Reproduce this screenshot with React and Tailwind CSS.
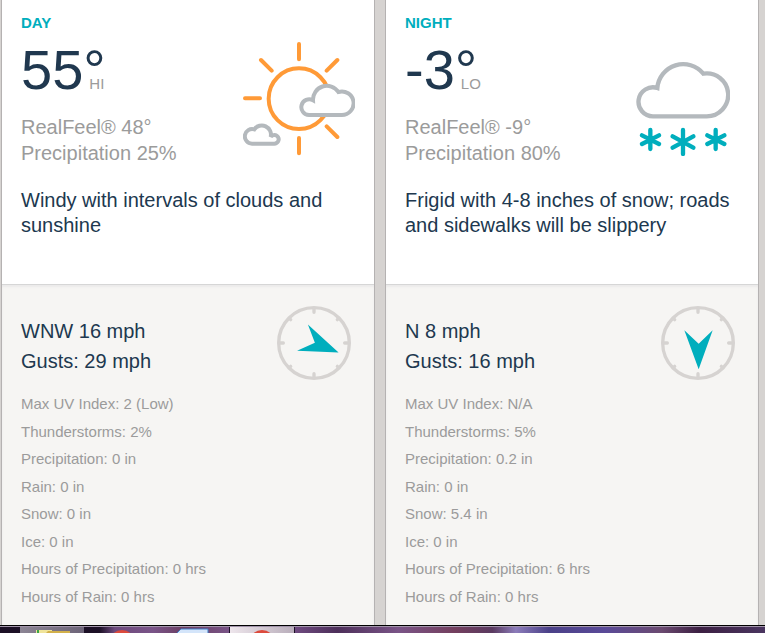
const forecasts = [
  {
    title: 'Day',
    temp: '55',
    label: 'HI',
    realFeel: '48°',
    precip: '25%',
    phrase: 'Windy with intervals of clouds and sunshine',
    wind: 'WNW 16 mph',
    gusts: '29 mph',
    windAngle: -67.5,
    Icon: SunCloudsIcon,
    stats: [
      'Max UV Index: 2 (Low)',
      'Thunderstorms: 2%',
      'Precipitation: 0 in',
      'Rain: 0 in',
      'Snow: 0 in',
      'Ice: 0 in',
      'Hours of Precipitation: 0 hrs',
      'Hours of Rain: 0 hrs',
    ],
  },
  {
    title: 'Night',
    temp: '-3',
    label: 'LO',
    realFeel: '-9°',
    precip: '80%',
    phrase: 'Frigid with 4-8 inches of snow; roads and sidewalks will be slippery',
    wind: 'N 8 mph',
    gusts: '16 mph',
    windAngle: 0,
    Icon: SnowIcon,
    stats: [
      'Max UV Index: N/A',
      'Thunderstorms: 5%',
      'Precipitation: 0.2 in',
      'Rain: 0 in',
      'Snow: 5.4 in',
      'Ice: 0 in',
      'Hours of Precipitation: 6 hrs',
      'Hours of Rain: 0 hrs',
    ],
  },
];

function SunCloudsIcon() {
  return (
    <svg viewBox="39 36 336 342" className="w-28 h-[114px]" fill="none" strokeWidth="12" aria-hidden="true">
      <g stroke="#ff9a37" strokeLinecap="round">
        <circle cx="207" cy="206" r="91" />
        <path d="M207 42V88M207 324V370M45 205H90M93 90L125 122M322 90L290 122M290 289L322 321" />
      </g>
      <g stroke="#b4b9bd" fill="#fff">
        <path d="M237 255A23.5 23.5 0 1 1 249 211A41.5 41.5 0 0 1 325 186A35.3 35.3 0 1 1 335 255Z" />
        <path d="M66 341A22 22 0 1 1 73 298A27.5 27.5 0 0 1 122 321A13 13 0 1 1 133 341Z" />
      </g>
    </svg>
  );
}

function SnowIcon() {
  return (
    <svg viewBox="48 60 282 285" className="w-[94px] h-[95px]" fill="none" aria-hidden="true">
      <path
        d="M99 226A43.5 43.5 0 1 1 112 141A78 78 0 0 1 250 98A64.4 64.4 0 1 1 260 226Z"
        stroke="#b4b9bd"
        strokeWidth="13"
      />
      <path
        d="M91 267V324M66 283L117 309M117 283L66 309M189 267V339M158 286L220 320M220 286L158 320M287 267V324M262 283L313 309M313 283L262 309"
        stroke="#00aebd"
        strokeWidth="13"
        strokeLinecap="round"
      />
    </svg>
  );
}

function Compass({ angle }) {
  return (
    <svg viewBox="-111 -111 222 222" className="w-[74px] h-[74px] shrink-0" aria-hidden="true">
      <g fill="none" stroke="#d6d3d1" strokeWidth="10" strokeLinecap="round">
        <circle r="106" />
        <path d="M0 -102V-92M0 102V92M-102 0H-92M102 0H92M-74 -74L-70 -70M74 -74L70 -70M-74 74L-70 70M74 74L70 70" />
      </g>
      <path d="M-41 -38L2 2L44 -38L2 79Z" fill="#00aebd" transform={`rotate(${angle})`} />
    </svg>
  );
}

const ForecastCard = ({ item }) => {
  const { Icon } = item;

  return (
    <section className="flex-1 min-w-0 flex flex-col bg-[#f6f5f3] border-x border-[#b5b2b2]">
      <div className="bg-white px-[19px] pt-[13px] pb-[46px]">
        <div className="flex justify-between">
          <div>
            <h2 className="text-[15px] leading-5 font-bold uppercase text-[#00aebd]">{item.title}</h2>
            <div className="flex mt-[9px] text-[56px] leading-[56px] text-[#20384f]">
              <span>{item.temp}</span>
              <span className="relative">
                °
                <span className="absolute left-[6px] bottom-1 text-[15px] leading-5 text-[#9b9b9b]">{item.label}</span>
              </span>
            </div>
            <p className="mt-4 text-xl leading-[26px] text-[#9b9b9b]">RealFeel® {item.realFeel}</p>
            <p className="text-xl leading-[26px] text-[#9b9b9b]">Precipitation {item.precip}</p>
          </div>
          <div className="w-28 h-[143px] flex items-end justify-center">
            <Icon />
          </div>
        </div>
        <p className="mt-[22px] text-xl leading-[25px] text-[#20384f]">{item.phrase}</p>
      </div>

      <div className="flex-1 flex flex-col px-[19px] pt-[21px] pb-[15px] border-t border-[#d6d6d6] shadow-[inset_0_2px_2px_#ebeaea]">
        <div className="flex justify-between pr-1">
          <div className="pt-[10px] text-xl leading-[30px] text-[#20384f]">
            <p>{item.wind}</p>
            <p>Gusts: {item.gusts}</p>
          </div>
          <Compass angle={item.windAngle} />
        </div>
        <ul className="flex-1 flex flex-col justify-between mt-[10px] text-[15px] leading-[27px] text-[#9b9b9b]">
          {item.stats.map((stat) => (
            <li key={stat}>{stat}</li>
          ))}
        </ul>
      </div>
    </section>
  );
};

// Only the top edge of the desktop taskbar is visible
const Taskbar = () => (
  <footer className="h-2 overflow-hidden border-t border-black bg-[#1c1026]">
    <div className="h-px bg-[#a294aa]" />
    <div className="flex h-[6px] pl-[19px] bg-[linear-gradient(90deg,#1c1026_13%,#6d4a7d_15%,#7a5488_20%,#6b3f63_24%,#795487_30%)]">
      <button type="button" aria-label="File Explorer" className="w-[66px] h-[6px] overflow-hidden border-x border-[#1c1026] bg-linear-to-r from-[#8c8594] to-[#6d6478]">
        <svg viewBox="0 0 64 6" className="block w-full h-[6px]">
          <path d="M16 6V3H32V6Z" fill="#f0e49a" />
          <path d="M18 3V6" stroke="#3ba64a" strokeWidth="2" />
          <path d="M26 6L28 4H50V6Z" fill="#d2b04a" />
        </svg>
      </button>
      <svg viewBox="0 0 144 6" className="w-36 h-[6px]">
        <circle cx="37" cy="16" r="13" fill="#dc4a3c" />
        <path d="M91 7L96 2H123V7Z" fill="#d4e5fa" stroke="#3f7fc8" />
      </svg>
      <button type="button" aria-label="Browser" className="w-[66px] h-[6px] overflow-hidden border-x border-[#1c1026] bg-linear-to-r from-[#eee6ec] to-[#b9aebb]">
        <svg viewBox="0 0 64 6" className="block w-full h-[6px]">
          <circle cx="32" cy="16" r="13" fill="#dc4a3c" />
        </svg>
      </button>
      <div className="flex-1 bg-[linear-gradient(90deg,#6f4a80,#4d2f5a_9%,#7a5487_22%,#743f5e_34%,#5a3a60_42%,#8c7cba_47%,#4a4088_54%,#5a4a98_66%,#6b4a70_78%,#3c1f42_86%,#4a3560)]" />
    </div>
  </footer>
);

const App = () => {
  return (
    <div className="min-h-screen flex flex-col bg-[#d6d3d1] font-['Liberation_Sans',Arial,sans-serif]">
      <main className="flex-1 flex gap-[10px] pl-px pr-[6px]">
        {forecasts.map((item) => (
          <ForecastCard key={item.title} item={item} />
        ))}
      </main>
      <Taskbar />
    </div>
  );
};

export default App;
